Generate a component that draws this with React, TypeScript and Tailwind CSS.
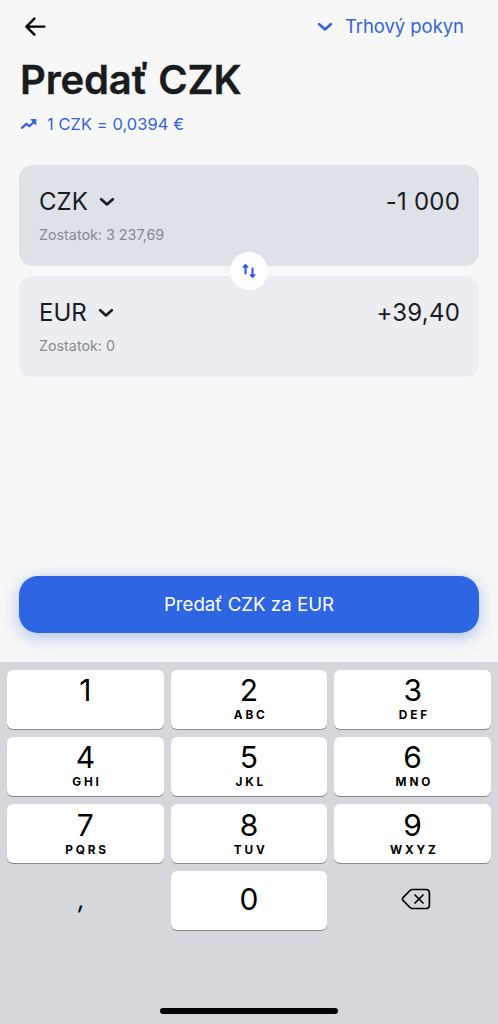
interface Key {
  digit: string;
  letters?: string;
}

const keys: Key[] = [
  { digit: '1' },
  { digit: '2', letters: 'ABC' },
  { digit: '3', letters: 'DEF' },
  { digit: '4', letters: 'GHI' },
  { digit: '5', letters: 'JKL' },
  { digit: '6', letters: 'MNO' },
  { digit: '7', letters: 'PQRS' },
  { digit: '8', letters: 'TUV' },
  { digit: '9', letters: 'WXYZ' },
];

function Chevron({ className }: { className?: string }) {
  return (
    <svg
      width="16"
      height="10"
      viewBox="0 0 16 10"
      fill="none"
      stroke="currentColor"
      strokeWidth="2.7"
      strokeLinecap="round"
      strokeLinejoin="round"
      className={className}
    >
      <path d="M2.2 2.2 L8 7.4 L13.8 2.2" />
    </svg>
  );
}

interface CurrencyCardProps {
  code: string;
  amount: string;
  balance: string;
  className: string;
}

function CurrencyCard({ code, amount, balance, className }: CurrencyCardProps) {
  return (
    <div className={`h-[101px] rounded-[14px] pl-5 pr-[19px] pt-5 ${className}`}>
      <div className="flex h-8 items-center justify-between text-[24px] leading-[33px] text-[#191c1f]">
        <button className="flex items-center gap-[11px]">
          <span>{code}</span>
          <Chevron className="mt-px" />
        </button>
        <span className="tracking-[0.2px]">{amount}</span>
      </div>
      <p className="mt-2 text-[14.3px] leading-5 text-[#868b93]">Zostatok: {balance}</p>
    </div>
  );
}

function KeypadKey({ digit, letters }: Key) {
  return (
    <button className="flex h-[59px] flex-col items-center rounded-[6px] bg-white pt-[2.5px] shadow-[0_1px_0_#898a8d]">
      <span className="text-[30px] leading-9">{digit}</span>
      {letters && (
        <span className="pl-[3.4px] text-[11.8px] leading-[14px] font-bold tracking-[2.8px]">{letters}</span>
      )}
    </button>
  );
}

export default function App() {
  return (
    <div className="flex h-[1024px] w-[498px] flex-col overflow-hidden bg-[#f7f7f7] font-['Inter',sans-serif] whitespace-nowrap">
      <header className="flex h-[53px] items-center justify-between pl-[24px] pr-[34px]">
        <button aria-label="Späť">
          <svg
            width="22"
            height="20"
            viewBox="0 0 22 20"
            fill="none"
            stroke="#000"
            strokeWidth="2.4"
            strokeLinecap="round"
            strokeLinejoin="round"
          >
            <path d="M20.4 9.6 H2.8 M10.4 1.6 L2.4 9.6 L10.4 17.6" />
          </svg>
        </button>
        <button className="flex items-center gap-3 pb-px text-[18.5px] leading-6 tracking-[-0.05px] text-[#3564d9]">
          <Chevron className="mt-px" />
          Trhový pokyn
        </button>
      </header>

      <div className="px-[19px]">
        <h1 className="pt-1 pl-px text-[40px] leading-[46px] font-semibold tracking-[-0.15px] text-[#191c1f] [-webkit-text-stroke:0.4px_#191c1f]">
          Predať CZK
        </h1>
        <div className="mt-[11px] flex h-5 items-center gap-[9px] pl-px text-[16.4px] leading-5 text-[#3564d9]">
          <svg
            width="18"
            height="12"
            viewBox="0 0 18 12"
            fill="none"
            stroke="currentColor"
            strokeWidth="2.3"
            strokeLinecap="round"
            strokeLinejoin="round"
          >
            <path d="M2 9.8 L6.3 5.8 L9.4 8.2 L14 3.7" />
            <path d="M11.2 1.7 H15.8 V6.3 Z" fill="currentColor" strokeWidth="1.2" />
          </svg>
          <span className="tracking-[0.1px]">1 CZK = 0,0394 €</span>
        </div>

        <div className="relative mt-[31px] flex flex-col gap-[10px]">
          <CurrencyCard code="CZK" amount="-1 000" balance="3 237,69" className="bg-[#dee1e7]" />
          <CurrencyCard code="EUR" amount="+39,40" balance="0" className="bg-[#ebedf2]" />
          <button
            aria-label="Vymeniť meny"
            className="absolute top-[87px] left-[211px] flex size-[38px] items-center justify-center rounded-full bg-white"
          >
            <svg
              width="16"
              height="16"
              viewBox="0 0 16 16"
              fill="none"
              stroke="#2f62dc"
              strokeWidth="2.2"
              strokeLinecap="round"
              strokeLinejoin="round"
            >
              <path d="M4.5 10.5 V2.5" />
              <path d="M11.5 5.5 V13.5" />
              <path d="M2.2 4 L4.5 1.7 L6.8 4 Z M9.2 12 L11.5 14.3 L13.8 12 Z" fill="#2f62dc" strokeWidth="1.4" />
            </svg>
          </button>
        </div>

        <button className="mt-[199px] h-[57px] w-full rounded-[19px] bg-[#2d65e3] pt-px text-[18.7px] leading-7 text-white shadow-[0_4px_16px_rgba(45,101,227,0.38)]">
          Predať CZK za EUR
        </button>
      </div>

      <div className="mt-auto flex h-[362px] flex-col bg-[#d5d7dd] px-[7px] pt-[7.5px] text-black">
        <div className="grid grid-cols-3 gap-x-[7px] gap-y-[8.3px]">
          {keys.map((key) => (
            <KeypadKey key={key.digit} {...key} />
          ))}
          <button className="h-[59px] pr-2 pb-1 text-[25px] leading-[54px]">
            <span className="inline-block -skew-x-6">,</span>
          </button>
          <button className="h-[59px] rounded-[6px] bg-white pb-[3px] text-[30px] leading-[56px] shadow-[0_1px_0_#898a8d]">
            0
          </button>
          <button aria-label="Vymazať" className="flex h-[59px] items-center justify-center pb-[3px] pl-[6px]">
            <svg
              width="30"
              height="22"
              viewBox="0 0 30 22"
              fill="none"
              stroke="currentColor"
              strokeWidth="1.7"
              strokeLinecap="round"
              strokeLinejoin="round"
            >
              <path d="M11.5 1.5 H24.8 Q28.4 1.5 28.4 5.1 V16.9 Q28.4 20.5 24.8 20.5 H11.5 Q10 20.5 9 19.5 L2 12.3 Q0.9 11 2 9.7 L9 2.5 Q10 1.5 11.5 1.5 Z" />
              <path d="M14 7 L22 15 M22 7 L14 15" />
            </svg>
          </button>
        </div>
        <div className="mx-auto mt-auto mb-[10px] h-[6px] w-[178px] rounded-full bg-black" />
      </div>
    </div>
  );
}
